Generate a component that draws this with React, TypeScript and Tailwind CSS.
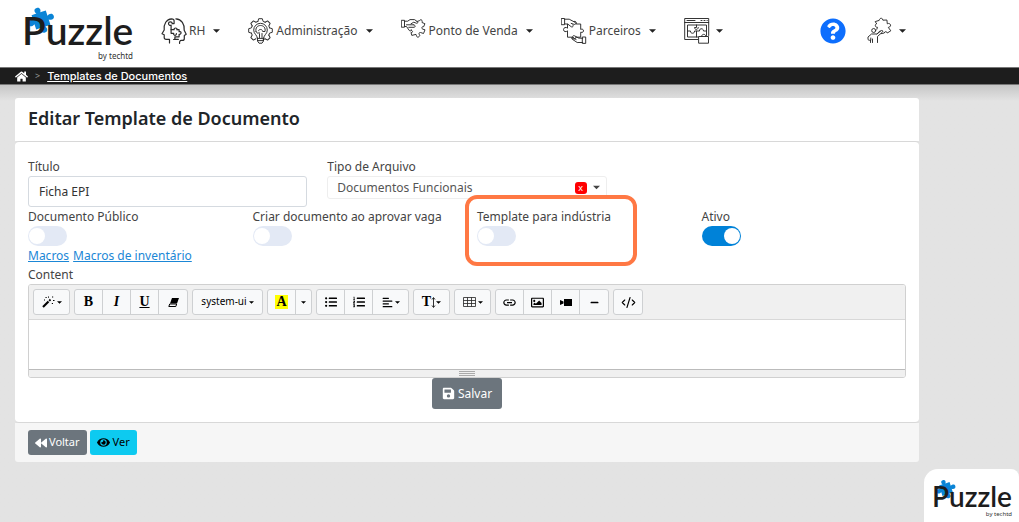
import type { ReactNode } from 'react';
import {
  FaAlignLeft,
  FaBackward,
  FaEye,
  FaHome,
  FaListOl,
  FaListUl,
  FaMinus,
  FaQuestionCircle,
  FaRegImage,
  FaSave,
} from 'react-icons/fa';
import { MdLink } from 'react-icons/md';
import { LuCodeXml } from 'react-icons/lu';

const Caret = ({ className = 'w-[7px] h-1' }: { className?: string }) => (
  <svg viewBox="0 0 8 4" className={`${className} shrink-0`} fill="currentColor" aria-hidden="true">
    <path d="M0 0h8L4 4z" />
  </svg>
);

const Line = ({ children }: { children: ReactNode }) => (
  <svg
    viewBox="0 0 26 28"
    className="w-[26px] h-7 shrink-0"
    fill="none"
    stroke="#2a2a2a"
    strokeWidth="0.95"
    strokeLinecap="round"
    strokeLinejoin="round"
    aria-hidden="true"
  >
    {children}
  </svg>
);

const HeadsIcon = () => (
  <Line>
    <g strokeWidth="1.2">
      <path d="M8.500 26v-3.600H5.200c-1.400 0-2-.8-2-2v-2.600L1 16.800 3.200 13C2.500 7 5.500 2.200 10.500 1.800c1.800 0 2.600.6 2.600 2v2.800h-2c.2-2.400-3.600-2.400-3.600 0 0 1.700 1.700 2.200 2.600 1.600v4.500h3c-.3-2.300 3.200-2.300 3 0" />
      <path d="M18.600 26.400c-.3-1.700.4-3 1.700-3h1.100c1.300 0 1.900-.8 1.900-2v-3l1.900-1.200-2-4c.5-6-2.600-11-8.300-11.400" />
      <path d="M16.100 12.700h2v2c2.400-.8 2.800 2.900 0 2.600v2.500h-4.200c.3 1.200 0 2.700-1.300 2.700M10.100 12.700v3.600h2.600c-.6 2.600 2.800 2.600 2.700.3M13.900 19.800v2.500h3.500" />
    </g>
  </Line>
);

const GearIcon = () => (
  <Line>
    <g transform="translate(0 1)">
      {[0, 45, 90, 135, 225, 270, 315].map((angle) => (
        <path key={angle} d="M9.900 3.400 10.700.7h3.600l.8 2.700 2 .8" transform={`rotate(${angle} 12.500 12.500)`} />
      ))}
      <path d="M9.300 20c0-3-3.600-4-3.600-7.900a6.800 6.800 0 0 1 13.600 0c0 3.900-3.600 4.900-3.600 7.900z" />
      <path d="M8 13.500c-.8-3.800 1.500-6 4.500-6s5.300 2.200 4.500 6h-2.200M8 13.500c.7 2 2.500 2.200 3.500.8M11.500 19.500v-3.800M14 19.500v-4M10.500 12.500c1-1.500 3-1.500 4 0" />
      <path d="M9.500 20v3l1.500 2.200h3l1.500-2.200v-3M9.700 22.600h5.600" />
    </g>
  </Line>
);

const HandPieceIcon = () => (
  <Line>
    <path d="M.7 3.300h2.800v6.900H.7zM3.500 4.200h3.200L9 2.600h4.500l2.800 2c1 .8.300 2-.8 1.700L12.800 5.200 10 6.800" />
    <path d="M3.500 9.500h2l2.800 4c1 1 2.300.4 2-.8M5.500 7.800h7.200M7.800 10.300h5.400c1.500-.3 1.200-2.300-.3-2.400" />
    <path d="m16 4.500 2.500-.8c.6-1.700 3-1 2.700.8l-.2 1 2.900 1.200-1.200 3c-1.700-.8-2.600 1.800-.9 2.500l2.200.6-1.500 3.700-3-1c-1.300-.3-1.800 1-1.300 1.800l.6 1c-.7 2.400-3 2.400-3.300.5l-.5-1.400-4.200 1-.8-2.900c1.700.6 2.200-1.800.6-2.100" />
  </Line>
);

const PartnersIcon = () => (
  <Line>
    <path d="M.6 1.500h3v6.200h-3zM3.600 2.200h4.600l6 3.200c1.500 1 .3 2.400-1 2l-3-1M3.600 6.900l3.200.2 3.500 2.700c1.500.6 2.600-.8 1.600-1.900" />
    <path d="M6.500 7.200v4c-1.300-1.400-4-.8-4 1.400s2.600 2.700 4 1.200v6.400h4.600c-1.200 2.400 4.600 2.400 3.600 0h5v-5c3.500 1.500 4-4.200 0-2.800V7h-4.600c.8-1.600-.3-3-1.900-2.700" />
    <path d="M21.700 20h3v6.400h-3zM21.700 21.300l-4-.2-4.200-2.300c-1.800-.7-2.600 1.200-1.200 2.200l2.800 1.500M21.700 25.500h-5.500l-5-3.300c-1.300-1.200.2-2.300 1.500-1.500" />
  </Line>
);

const BoardIcon = () => (
  <Line>
    <path d="M14 22.500H.7V1.500h24v17M.7 5.500h24M3 3.500h8M17 3.500h1m2 0h1m2 0h.3" />
    <path d="M14 20H3.500V8h19v10.500M12.500 8v2.500h-2c0 2.600 3.800 2.600 3.800 0M3.500 14h3c-.5 3 4.500 3 4 0h2v6M12.500 14h3c-.5-3 4.200-3 4 0h3" />
    <path d="M15 19.500h9.500v6.700H15zM17.700 19.500c-.5-3 4.600-3 4 0" />
  </Line>
);

const PersonPieceIcon = () => (
  <Line>
    <circle cx="6.700" cy="13.500" r="2" />
    <path d="m9.500 6.600-1.300-2 4-1.200C12.600.5 15.800.7 15.900 3.200l4-.2.4 3.800c2.400-1.300 4.500 1.500 2.500 3l-1.500.6 2.500 3.400-3.500 2.200c-.3-1.800-2.800-1.800-3 0l-3 .6M9.500 6.600c-2 .8-1.500 4 1 3.700l-.7 2" />
    <path d="M10.500 25.500v-6l5-4.500c.8-1-.2-2-1.200-1.400L10 17H4.500L1 20v2.600c1.300 1 2 .8 2.500.3v2.600M3.800 21v2M5.500 22v3.500M10 17l3-3.200" />
  </Line>
);

// blue piece that sits behind the P of the brand
const Piece = ({ className }: { className: string }) => (
  <svg viewBox="0 0 28 28" className={className} fill="#0a84d6" aria-hidden="true">
    <g transform="rotate(-18 14 14)">
      <path d="M7 7h4.800c-1.600-2-1.300-5 1.800-5s3.500 3 1.900 5H21v5c2-1.500 5.500-1.200 5.500 2s-3.500 3.500-5.500 1.800V21h-5c1.600 2 1.200 5.300-2 5.300s-3.700-3.300-2-5.300H7v-5.200c-2 1.700-5.500 1.400-5.500-1.800S5 10.500 7 12z" />
    </g>
  </svg>
);

const Logo = ({ small }: { small?: boolean }) => (
  <div className={small ? 'relative w-20' : 'relative w-[111px]'}>
    <Piece className={small ? 'absolute left-[3px] -top-1 size-[22px]' : 'absolute left-1 -top-[5px] size-[30px]'} />
    <div
      className={
        small
          ? "relative font-['Lato',sans-serif] font-semibold text-[28px] leading-7 text-[#1d1d1d]"
          : "relative font-['Lato',sans-serif] font-semibold text-[39px] leading-10 text-[#1d1d1d]"
      }
    >
      Puzzle
    </div>
    <div className={small ? 'text-right text-[6px] leading-2 text-[#333]' : 'text-right text-[8px] leading-3 text-[#333]'}>
      by techtd
    </div>
  </div>
);

const NavItem = ({ icon, label, name }: { icon: ReactNode; label?: string; name?: string }) => (
  <button type="button" aria-label={name} className="flex items-center text-[#444]">
    {icon}
    {label && <span className="mx-0.5 whitespace-nowrap">{label}</span>}
    <Caret className="w-[7px] h-1 ml-1.5 text-[#222]" />
  </button>
);

const Toggle = ({ id, label, checked }: { id: string; label: string; checked?: boolean }) => (
  <div className="flex flex-col">
    <label htmlFor={id} className="leading-[19px] whitespace-nowrap">{label}</label>
    <input
      id={id}
      type="checkbox"
      defaultChecked={checked}
      className="appearance-none flex items-center w-[39px] h-5 px-px rounded-full bg-[#e3e9f5] checked:bg-[#0082d8] before:block before:size-4 before:rounded-full before:bg-white checked:before:ml-auto"
    />
  </div>
);

const Group = ({ children }: { children: ReactNode }) => (
  <div className="flex h-[26px] rounded-[3px] border border-[#ced0d2] bg-[#f8f9fa] divide-x divide-[#ced0d2] text-black">
    {children}
  </div>
);

const Tool = ({ name, className = 'w-7', children }: { name: string; className?: string; children: ReactNode }) => (
  <button type="button" aria-label={name} className={`${className} flex items-center justify-center gap-0.5`}>
    {children}
  </button>
);

const serif = "font-['Liberation_Serif',serif] font-bold text-sm";

const Toolbar = () => (
  <div className="flex flex-wrap gap-1 p-1 bg-[#f0f0f0] border-b border-[#d8d8d8]">
    <Group>
      <Tool name="Estilo" className="w-[35px]">
        <svg viewBox="0 0 13 12" className="w-[13px] h-3" fill="none" stroke="currentColor">
          <path d="m1 11 5.500-5.500" strokeWidth="2.200" />
          <path d="M7.200 4.800 8.500 3.500" strokeWidth="1.800" />
          <path d="M3.500 1.500h1.200M6.500.5v1.200M10 1h1.200M11 4.500h1.500M9.800 7.500H11M2 4h1" />
        </svg>
        <Caret className="w-[5px] h-[3px]" />
      </Tool>
    </Group>
    <Group>
      <Tool name="Negrito"><span className={serif}>B</span></Tool>
      <Tool name="Itálico"><span className={`${serif} italic`}>I</span></Tool>
      <Tool name="Sublinhado"><span className={`${serif} underline`}>U</span></Tool>
      <Tool name="Limpar">
        <svg viewBox="0 0 11 9" className="w-[11px] h-[9px]" fill="currentColor">
          <path d="M4 0h7L9 5.500H2z" />
          <path d="M1.700 6h7l-.9 2.500H.8z" fill="none" stroke="currentColor" />
        </svg>
      </Tool>
    </Group>
    <Group>
      <Tool name="Fonte" className="w-[69px] text-[10px]">system-ui<Caret className="w-[5px] h-[3px]" /></Tool>
    </Group>
    <Group>
      <Tool name="Cor"><span className={`${serif} bg-[#ff0] leading-[14px] px-px`}>A</span></Tool>
      <Tool name="Mais cores" className="w-[15px]"><Caret className="w-[5px] h-[3px]" /></Tool>
    </Group>
    <Group>
      <Tool name="Lista"><FaListUl size={12} /></Tool>
      <Tool name="Lista numerada"><FaListOl size={12} /></Tool>
      <Tool name="Parágrafo" className="w-[35px]"><FaAlignLeft size={11} /><Caret className="w-[5px] h-[3px]" /></Tool>
    </Group>
    <Group>
      <Tool name="Altura da linha" className="w-[35px]">
        <span className={serif}>T</span>
        <svg viewBox="0 0 5 11" className="w-[5px] h-[11px] -ml-0.5" fill="none" stroke="currentColor" strokeWidth="0.8">
          <path d="M2.500 1v9M1 2.500l1.500-2 1.500 2M1 8.500l1.500 2 1.500-2" />
        </svg>
        <Caret className="w-[5px] h-[3px] -ml-0.5" />
      </Tool>
    </Group>
    <Group>
      <Tool name="Tabela" className="w-[35px]">
        <svg viewBox="0 0 13 10" className="w-[13px] h-2.5" fill="none" stroke="#222" strokeWidth="0.8">
          <path d="M.5.5h12v9H.5zM.5 3.500h12M.5 6.500h12M4.500.5v9M8.500.5v9" />
        </svg>
        <Caret className="w-[5px] h-[3px]" />
      </Tool>
    </Group>
    <Group>
      <Tool name="Link"><MdLink size={15} /></Tool>
      <Tool name="Imagem"><FaRegImage size={13} /></Tool>
      <Tool name="Vídeo">
        <svg viewBox="0 0 12 7" className="w-3 h-[7px]" fill="currentColor"><path d="M4 0h8v7H4zM0 1l3.500 1.500v2L0 6z" /></svg>
      </Tool>
      <Tool name="Linha"><FaMinus size={9} /></Tool>
    </Group>
    <Group>
      <Tool name="Código"><LuCodeXml size={15} strokeWidth={1.8} /></Tool>
    </Group>
  </div>
);

export default function App() {
  return (
    <div className="min-h-screen bg-[#e3e3e3] font-['Noto_Sans',sans-serif] text-xs text-[#444]">
      <header className="flex items-start h-[67px] pl-[22px] pr-[113px] bg-white">
        <div className="pt-[10px]"><Logo /></div>
        <nav className="flex items-center gap-7 ml-7 pt-[17px]">
          <NavItem icon={<HeadsIcon />} label="RH" />
          <NavItem icon={<GearIcon />} label="Administração" />
          <NavItem icon={<HandPieceIcon />} label="Ponto de Venda" />
          <NavItem icon={<PartnersIcon />} label="Parceiros" />
          <NavItem icon={<BoardIcon />} name="Painel" />
        </nav>
        <div className="flex items-center gap-[21px] ml-auto pt-[17px]">
          <a href="#ajuda" aria-label="Ajuda"><FaQuestionCircle size={26} className="text-[#0d6efd]" /></a>
          <NavItem icon={<PersonPieceIcon />} name="Conta" />
        </div>
      </header>

      <div className="flex items-center h-[18px] pl-[15px] border-y border-[#777] bg-[#1d1d1d] text-white">
        <a href="#inicio" aria-label="Início"><FaHome size={13} /></a>
        <span className="mx-[7px] text-[9px] text-[#999]">&gt;</span>
        <a href="#templates" className="font-['Inter',sans-serif] font-medium text-[11px] leading-4 underline">Templates de Documentos</a>
      </div>

      <main className="pl-[15px] pr-[100px] pt-[13px] pb-[60px] bg-linear-to-b from-[#c6c6c6] to-[#e3e3e3] to-[16px]">
        <h1 className="h-[43px] pl-[13px] rounded-t-[3px] bg-white text-lg leading-10 font-semibold text-[#212529]">
          Editar Template de Documento
        </h1>
        <form className="px-[13px] pt-[15px] pb-[13px] rounded border-y border-[#d8d8d8] bg-white">
          <div className="grid grid-cols-3 gap-5">
            <div>
              <label htmlFor="titulo" className="block leading-[19px]">Título</label>
              <input
                id="titulo"
                defaultValue="Ficha EPI"
                className="block w-full h-[31px] px-2.5 rounded-[3px] border border-[#d5dae0] text-[#333]"
              />
            </div>
            <div>
              <label htmlFor="tipo" className="block leading-[19px]">Tipo de Arquivo</label>
              <div className="flex items-center h-[23px] pl-[9px] pr-1.5 rounded-[3px] border border-[#eee]">
                <select id="tipo" className="appearance-none grow text-[#555]">
                  <option>Documentos Funcionais</option>
                </select>
                <button type="button" aria-label="Remover" className="size-3 mr-1.5 rounded-[3px] bg-[#f00] text-white text-[9px] leading-3">
                  x
                </button>
                <Caret className="w-[7px] h-[5px]" />
              </div>
            </div>
          </div>

          <div className="grid grid-cols-4 gap-5">
            <Toggle id="publico" label="Documento Público" />
            <Toggle id="vaga" label="Criar documento ao aprovar vaga" />
            <div className="relative">
              <Toggle id="industria" label="Template para indústria" />
              <div className="absolute -left-3 -top-3 w-[172px] h-[71px] rounded-xl border-4 border-[#ff7844] pointer-events-none" />
            </div>
            <Toggle id="ativo" label="Ativo" checked />
          </div>

          <div className="flex gap-1 leading-5 text-[#1b87d6]">
            <a href="#macros" className="underline">Macros</a>
            <a href="#inventario" className="underline">Macros de inventário</a>
          </div>

          <label htmlFor="content" className="block leading-[18px]">Content</label>
          <div className="rounded-[3px] border border-[#d0d0d0] overflow-hidden">
            <Toolbar />
            <textarea id="content" className="block w-full h-[49px] resize-none outline-none" />
            <div className="flex flex-col items-center justify-center gap-px h-2 border-t border-[#bbb] bg-[#f0f0f0]">
              <div className="w-4 h-px bg-[#aaa]" />
              <div className="w-4 h-px bg-[#aaa]" />
              <div className="w-4 h-px bg-[#aaa]" />
            </div>
          </div>
          <button type="submit" className="flex items-center gap-[3px] h-[31px] mx-auto px-2.5 rounded-[3px] bg-[#6c757d] text-white">
            <FaSave size={13} />
            Salvar
          </button>
        </form>
        <footer className="flex gap-[3px] px-[13px] py-[7px] rounded-b-[3px] bg-[#f6f6f6] text-[11px]">
          <button type="button" className="flex items-center gap-0.5 h-[25px] px-[7px] rounded-[3px] bg-[#6c757d] text-white">
            <FaBackward size={12} />
            Voltar
          </button>
          <button type="button" className="flex items-center gap-[3px] h-[25px] px-[7px] rounded-[3px] bg-[#0dcaf0] text-black">
            <FaEye size={13} />
            Ver
          </button>
        </footer>
      </main>

      <div className="fixed right-0 bottom-0 pl-2 pr-[7px] pt-[13px] pb-1 rounded-tl-[14px] rounded-tr-lg bg-white">
        <Logo small />
      </div>
    </div>
  );
}
